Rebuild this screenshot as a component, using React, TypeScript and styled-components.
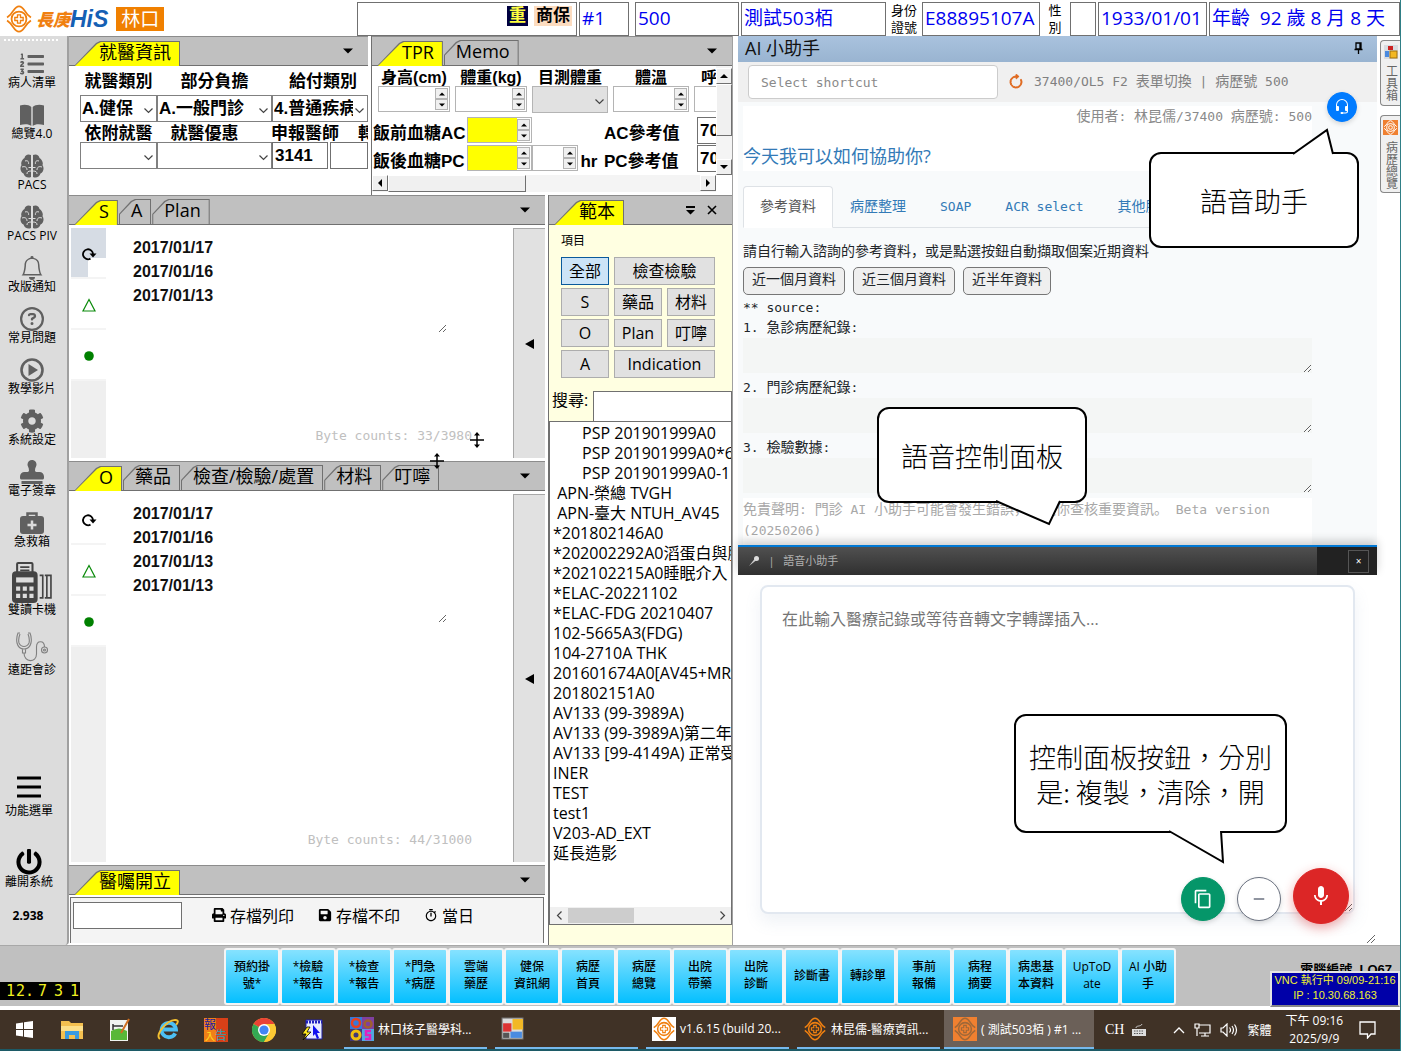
import React from 'react';
import styled, { createGlobalStyle, css } from 'styled-components';
import { FaListOl, FaCog, FaStamp, FaPrint, FaSave, FaPowerOff } from 'react-icons/fa';
import { FaRegCircleQuestion } from 'react-icons/fa6';
import { BsBell, BsArrowClockwise, BsHeadset } from 'react-icons/bs';
import { MdContentCopy, MdMic, MdRemove } from 'react-icons/md';
import { IoMdStopwatch } from 'react-icons/io';

const ui = '"Open Sans", "Noto Sans CJK TC", sans-serif';
const arial = '"Liberation Sans", "Noto Sans CJK TC", sans-serif';
const mono = '"DejaVu Sans Mono", "Noto Sans CJK JP", monospace';

const GlobalStyle = createGlobalStyle`
  *, *::before, *::after { box-sizing: border-box; }
  body { margin: 0; background: #fff; font-family: ${ui}; font-size: 16px; color: #000; }
  button, input, select, textarea { font: inherit; color: inherit; margin: 0; padding: 0; border-radius: 0; }
  button { cursor: pointer; }
`;

const Screen = styled.div`
  display: flex;
  flex-direction: column;
  min-height: 100vh;
  overflow: hidden;
  border-right: 1px solid #2f7f86;
`;

/* ---------- header ---------- */
const Header = styled.header`
  display: grid;
  grid-template-columns: 350px 220px 54px 104px 145px 32px 118px 26px 26px 109px minmax(0, 1fr);
  column-gap: 2px;
  height: 36px;
  padding: 2px 0 3px 5px;
  font-size: 19px;
  color: #0000f0;
`;
const Brand = styled.div`
  display: flex;
  align-items: center;
`;
const BrandZh = styled.span`
  margin-left: 3px;
  font: italic 900 17px/30px "Noto Sans CJK TC", sans-serif;
  color: #f08010;
`;
const BrandHis = styled.span`
  font: italic 900 23px/30px "Liberation Sans", sans-serif;
  color: #1560b4;
`;
const Site = styled.span`
  margin-left: 8px;
  padding: 0 5px;
  font-size: 19px;
  line-height: 24px;
  background: #f08000;
  color: #fff;
`;
const Field = styled.div<{ $after?: number }>`
  display: flex;
  align-items: center;
  min-width: 0;
  padding: 0 2px 3px;
  margin-right: ${(p) => p.$after ?? 0}px;
  border: 1px solid #707070;
  white-space: pre;
  overflow: hidden;
  line-height: 26px;
`;
const FlagField = styled(Field)`
  justify-content: flex-end;
  align-items: flex-start;
  gap: 6px;
  padding: 3px 4px;
  font: bold 17px/20px ${arial};
`;
const Flag = styled.span<{ $bg: string; $fg: string }>`
  padding: 0 2px;
  background: ${(p) => p.$bg};
  color: ${(p) => p.$fg};
`;
const FieldLabel = styled.div`
  font-size: 13px;
  line-height: 17px;
  color: #000;
  text-align: center;
  word-break: break-all;
`;

/* ---------- main grid ---------- */
const Main = styled.main`
  flex: 1;
  display: grid;
  grid-template-columns: 69px minmax(0, 664fr) 5px minmax(0, 639fr) 23px;
  min-height: 0;
`;

/* ---------- sidebar ---------- */
const Sidebar = styled.nav`
  display: flex;
  flex-direction: column;
  align-items: flex-start;
  background: #dcdcdc;
  border-right: 2px solid #a0a0a0;
  border-radius: 0 0 4px 0;
  padding-top: 3px;
`;
const Grip = styled.div`
  width: 56px;
  height: 2px;
  margin: 0 0 11px 4px;
  background: repeating-linear-gradient(90deg, #fff 0 2px, transparent 2px 4px);
`;
const SideItem = styled.button<{ $icon?: number; $gap?: number; $pad?: number }>`
  display: flex;
  flex-direction: column;
  align-items: center;
  width: 64px;
  border: 0;
  background: none;
  color: #000;
  font-size: 12px;
  line-height: 14px;
  white-space: nowrap;
  gap: ${(p) => p.$pad ?? 0}px;
  margin-bottom: ${(p) => p.$gap ?? 13}px;
  svg { width: ${(p) => p.$icon ?? 24}px; height: ${(p) => p.$icon ?? 24}px; color: #606060; flex: none; }
`;
const SideFoot = styled.div`
  margin-top: auto;
  width: 60px;
  svg { color: #000; }
  button { width: 58px; }
`;
const Version = styled.div`
  width: 56px;
  margin-bottom: 22px;
  text-align: center;
  font: bold 12px/14px "Noto Sans", sans-serif;
`;

/* ---------- docked panels ---------- */
const Center = styled.div`
  position: relative;
  display: flex;
  flex-direction: column;
  min-width: 0;
`;
const Split = styled.div<{ $cols: string; $grow?: boolean }>`
  display: grid;
  grid-template-columns: ${(p) => p.$cols};
  column-gap: 3px;
  ${(p) => p.$grow ? 'flex: 1;' : 'height: 159px;'}
`;
const Column = styled.div`
  display: flex;
  flex-direction: column;
  min-width: 0;
`;
const Panel = styled.section<{ $grow?: number; $h?: number; $edge?: boolean; $bg?: string }>`
  display: flex;
  flex-direction: column;
  min-width: 0;
  overflow: hidden;
  background: ${(p) => p.$bg ?? '#fff'};
  ${(p) => p.$grow && css`flex: ${p.$grow};`}
  ${(p) => p.$h && css`height: ${p.$h}px;`}
  ${(p) => p.$edge && css`border-left: 1px solid #707070; border-right: 1px solid #a0a0a0;`}
`;
const Strip = styled.div`
  display: flex;
  align-items: flex-end;
  flex: none;
  height: 30px;
  padding-left: 5px;
  background: #c0c0c0;
  border-top: 1px solid #8c8c8c;
  border-bottom: 1px solid #707070;
`;
const Tab = styled.button<{ $on?: boolean }>`
  --cut: ${(p) => (p.$on ? 'polygon(0 100%, 22px 2px, 26px 0, 100% 0, 100% 100%)' : 'polygon(0 100%, 0 60%, 12px 2px, 16px 0, 100% 0, 100% 100%)')};
  position: relative;
  isolation: isolate;
  height: 25px;
  padding: 0 9px 4px ${(p) => (p.$on ? 25 : 12)}px;
  margin-right: 1px;
  margin-bottom: ${(p) => (p.$on ? -1 : 0)}px;
  border: 0;
  background: #707070;
  clip-path: var(--cut);
  font-size: 18px;
  line-height: 20px;
  white-space: nowrap;
  &::before {
    content: '';
    position: absolute;
    z-index: -1;
    inset: 1px 1px 0 1px;
    background: ${(p) => (p.$on ? '#ffff00' : '#c0c0c0')};
    clip-path: var(--cut);
  }
`;
const StripTools = styled.div`
  display: flex;
  align-items: center;
  gap: 12px;
  margin-left: auto;
  margin-right: 15px;
  height: 28px;
`;
const IconButton = styled.button`
  display: flex;
  border: 0;
  background: none;
`;

/* ---------- visit form ---------- */
const VisitForm = styled.div`
  padding: 4px 0 0 11px;
  font: bold 17px/22px ${arial};
  white-space: nowrap;
`;
const VisitRow = styled.div<{ $cols: string; $h: number }>`
  display: grid;
  grid-template-columns: ${(p) => p.$cols};
  height: ${(p) => p.$h}px;
  overflow: hidden;
`;
const VisitLabel = styled.label`
  text-align: center;
  line-height: 24px;
`;
const ComboBox = styled.span<{ $w?: number; $grey?: boolean }>`
  position: relative;
  display: block;
  flex: none;
  height: 27px;
  ${(p) => p.$w && css`width: ${p.$w}px;`}
  select {
    width: 100%;
    height: 100%;
    padding: 0 14px 0 1px;
    appearance: none;
    border: 1px solid ${(p) => (p.$grey ? '#b4b4b4' : '#808080')};
    background: ${(p) => (p.$grey ? '#e1e1e1' : '#fff')};
    opacity: 1;
  }
  svg { position: absolute; right: 4px; top: 11px; }
`;
const PlainInput = styled.input<{ $w?: number; $after?: number }>`
  height: 27px;
  min-width: 0;
  ${(p) => p.$w && css`width: ${p.$w}px; flex: none;`}
  margin-right: ${(p) => p.$after ?? 0}px;
  padding-left: 2px;
  border: 1px solid #707070;
  background: #fff;
`;

/* ---------- vitals ---------- */
const VitalsFrame = styled.div`
  display: grid;
  grid-template-columns: minmax(0, 1fr) 16px;
  grid-template-rows: 109px 17px;
  font: bold 17px/20px ${arial};
`;
const VitalsView = styled.div`
  overflow: hidden;
  white-space: nowrap;
`;
const HeadRow = styled.div`
  display: flex;
  gap: 5px;
  height: 51px;
  padding: 4px 0 0 6px;
`;
const HeadCell = styled.div<{ $w: number }>`
  flex: none;
  width: ${(p) => p.$w}px;
  text-align: center;
  font-size: 16px;
  label { display: block; line-height: 16px; }
`;
const SugarRow = styled.div`
  display: flex;
  height: 26px;
  margin-bottom: 2px;
`;
const RowText = styled.label<{ $w: number }>`
  flex: none;
  width: ${(p) => p.$w}px;
  padding: 4px 0 0 1px;
  line-height: 26px;
`;
const SpinBox = styled.span<{ $w: number; $bg?: string }>`
  display: flex;
  flex: none;
  width: ${(p) => p.$w}px;
  height: 26px;
  border: 1px solid #b4b4b4;
  background: ${(p) => p.$bg ?? '#fff'};
  input { flex: 1; min-width: 0; width: 0; border: 0; background: none; }
`;
const SpinKeys = styled.span`
  display: grid;
  grid-template-rows: 1fr 1fr;
  width: 14px;
  padding: 1px 1px 1px 0;
  background: #fff;
  button { display: grid; place-items: center; border: 1px solid #b4b4b4; background: #f0f0f0; min-height: 0; }
`;
const ScrollBar = styled.div<{ $across?: boolean }>`
  display: flex;
  flex-direction: ${(p) => (p.$across ? 'row' : 'column')};
  padding-top: ${(p) => (p.$across ? 0 : 2)}px;
  background: #f4f4f4;
`;
const ScrollKey = styled.button`
  display: grid;
  place-items: center;
  width: 16px;
  height: 16px;
  flex: none;
  background: #f0f0f0;
  border: 1px solid;
  border-color: #fff #707070 #707070 #fff;
`;
const Thumb = styled.div<{ $len: number }>`
  flex: 0 0 ${(p) => p.$len}px;
  background: #f0f0f0;
  border: 1px solid;
  border-color: #fff #707070 #707070 #fff;
`;
const Track = styled.div`
  flex: 1;
`;

/* ---------- notes ---------- */
const NotesBody = styled.div`
  flex: 1;
  display: grid;
  grid-template-columns: 35px minmax(0, 1fr) 32px;
  padding: 3px 0 3px 2px;
`;
const Marks = styled.div`
  display: flex;
  flex-direction: column;
  background: #efefef;
`;
const Mark = styled.button<{ $lit?: boolean }>`
  display: grid;
  place-items: center;
  height: 51px;
  padding-top: 2px;
  border: 0;
  border-bottom: 2px solid #f4f4f4;
  background: ${(p) => (p.$lit ? 'linear-gradient(#fff, #fff) 17px 30px / 18px 19px no-repeat #d6dce4' : '#fff')};
`;
const NotesText = styled.div`
  display: flex;
  flex-direction: column;
  padding: 8px 41px 12px 19px;
  textarea {
    width: 322px;
    max-width: 100%;
    padding: 0 8px;
    border: 0;
    outline: 0;
    overflow: hidden;
    font: bold 16px/24px ${arial};
    color: #111;
  }
`;
const ByteCount = styled.output`
  margin-top: auto;
  align-self: flex-end;
  font: 13px/20px ${mono};
  color: #c0c0c0;
`;
const Fold = styled.button`
  display: grid;
  place-items: center;
  border: 1px solid #a8a8a8;
  border-width: 1px 0 0 1px;
  background: #e1e1e1;
`;

/* ---------- order entry ---------- */
const OrderBar = styled.div`
  flex: 1;
  display: flex;
  align-items: flex-start;
  gap: 24px;
  margin: 2px 1px 2px 1px;
  padding: 4px 0 0 2px;
  border: 1px solid #707070;
  border-width: 1px 1px 0 1px;
  background: #f4f4f4;
  button { display: flex; align-items: center; gap: 4px; padding-bottom: 2px; border: 0; background: none; height: 27px; white-space: nowrap; }
  svg { width: 14px; height: 14px; }
`;

/* ---------- templates ---------- */
const TplHead = styled.div`
  padding: 8px 18px 0 12px;
  font-size: 12px;
  line-height: 16px;
`;
const TplGrid = styled.div`
  display: grid;
  grid-template-columns: repeat(3, 48px);
  grid-auto-rows: 28px;
  gap: 3px 5px;
  margin-top: 8px;
  font-size: 16px;
`;
const TplButton = styled.button<{ $wide?: boolean; $on?: boolean }>`
  ${(p) => p.$wide && css`grid-column: span 2;`}
  border: 1px solid ${(p) => (p.$on ? '#0a5a9c' : '#adadad')};
  background: ${(p) => (p.$on ? '#cce4f7' : '#e1e1e1')};
  line-height: 24px;
  white-space: nowrap;
`;
const Search = styled.label`
  display: flex;
  gap: 5px;
  margin-top: 13px;
  padding-left: 3px;
  line-height: 18px;
  white-space: nowrap;
  input { flex: 1; height: 30px; min-width: 0; border: 1px solid #707070; border-bottom: 0; background: #fff; }
`;
const TplListBox = styled.div`
  flex: 1;
  display: flex;
  flex-direction: column;
  margin-bottom: 20px;
  border: 1px solid #707070;
  background: #fff;
`;
const TplList = styled.ul`
  flex: 1;
  margin: 0;
  padding: 1px 0 0 3px;
  list-style: none;
  line-height: 20px;
  overflow: hidden;
  white-space: pre;
`;
const FlatScroll = styled.div`
  display: flex;
  align-items: center;
  height: 17px;
  background: #f0f0f0;
  button { display: grid; place-items: center; width: 18px; height: 17px; border: 0; background: none; }
`;
const FlatThumb = styled.div`
  width: 66px;
  height: 15px;
  margin-right: auto;
  background: #cdcdcd;
`;

/* ---------- AI assistant ---------- */
const AiPane = styled.section`
  position: relative;
  display: flex;
  flex-direction: column;
  min-width: 0;
  font: 13px/20px ${mono};
  color: #212529;
`;
const AiTitle = styled.header`
  display: flex;
  align-items: center;
  justify-content: space-between;
  height: 26px;
  padding: 0 14px 3px 7px;
  background: linear-gradient(#a9c2de, #99b4d1);
  font: 18px/22px ${ui};
  color: #111;
`;
const AiToolbar = styled.div`
  display: flex;
  align-items: center;
  height: 40px;
  padding: 0 10px;
  background: #f0f0f0;
  color: #808080;
  white-space: pre;
  input {
    width: 250px;
    height: 34px;
    padding: 0 12px;
    border: 1px solid #ccc;
    border-radius: 4px;
    background: #fff;
    margin-right: 10px;
  }
  input::placeholder { color: #8a8a8a; opacity: 1; }
  svg { margin-right: 10px; }
`;
const AiBody = styled.div`
  flex: none;
  height: 443px;
  padding: 4px 65px 0 5px;
  background: #f8fafb;
`;
const AiHello = styled.div`
  background: #fff;
  height: 65px;
  padding-top: 1px;
`;
const UserLine = styled.div`
  text-align: right;
  color: #8a8a8a;
  white-space: pre;
`;
const Hello = styled.h1`
  margin: 16px 0 0;
  font: 400 18px/26px ${ui};
  color: #337ab7;
`;
const AiTabs = styled.div`
  display: flex;
  height: 42px;
  margin-top: 15px;
  border-bottom: 1px solid #dee2e6;
`;
const AiTab = styled.button<{ $on?: boolean }>`
  padding: 0 16px;
  margin-bottom: -1px;
  border: 1px solid transparent;
  background: none;
  color: #337ab7;
  white-space: nowrap;
  ${(p) => p.$on && css`
    border-color: #dee2e6 #dee2e6 #fff;
    border-radius: 4px 4px 0 0;
    background: #fff;
    color: #555;
  `}
`;
const Prompt = styled.p`
  margin: 14px 0 5px;
  white-space: nowrap;
`;
const RangeRow = styled.div`
  display: flex;
  gap: 8px;
  margin-bottom: 3px;
  button {
    height: 28px;
    padding: 0 8px 2px;
    border: 1px solid #767676;
    border-radius: 5px;
    background: #efefef;
  }
`;
const Source = styled.label`
  display: block;
  height: 60px;
  textarea {
    display: block;
    width: 100%;
    height: 35px;
    border: 0;
    background: #f4f6f5;
  }
`;
const Disclaimer = styled.p`
  margin: 0;
  height: 48px;
  padding-top: 1px;
  line-height: 21px;
  color: #a8a8a8;
  background: #fff;
`;
const Zh = styled.span`
  font-family: "Noto Sans CJK JP", sans-serif;
  font-size: 14px;
  line-height: 1;
`;

const VoiceBar = styled.div`
  position: relative;
  display: flex;
  align-items: center;
  height: 30px;
  padding-left: 10px;
  border-top: 2px solid #0078d4;
  background: linear-gradient(#505050, #303030);
  box-shadow: 0 -4px 10px rgba(0, 0, 0, 0.2);
  color: #b0b0b0;
  font: 11px/20px ${ui};
  white-space: pre;
`;
const VoiceClose = styled.div`
  display: flex;
  align-items: center;
  justify-content: flex-end;
  align-self: stretch;
  width: 60px;
  margin-left: auto;
  padding-right: 8px;
  background: #222;
  button { width: 21px; height: 23px; border: 1px solid #555; background: none; color: #fff; font-size: 10px; line-height: 20px; }
`;
const VoiceArea = styled.div`
  flex: 1;
  position: relative;
  display: flex;
  padding: 10px 22px 31px 22px;
  background: #fff;
  textarea {
    flex: 1;
    padding: 20px;
    border: 2px solid #e2e8f0;
    border-radius: 8px;
    box-shadow: 0 8px 16px rgba(120, 150, 180, 0.12);
    font: 16px/24px ${ui};
  }
  textarea::placeholder { color: #757575; opacity: 1; }
`;
const Corner = styled.div`
  position: absolute;
  right: 0;
  bottom: 0;
  line-height: 0;
`;
const Controls = styled.div`
  position: absolute;
  right: 28px;
  bottom: 21px;
  display: flex;
  align-items: flex-end;
  gap: 12px;
`;
const Round = styled.button<{ $size: number; $bg: string; $fg: string; $line?: string; $glow?: string; $lift?: number }>`
  display: grid;
  place-items: center;
  width: ${(p) => p.$size}px;
  height: ${(p) => p.$size}px;
  margin-bottom: ${(p) => p.$lift ?? 0}px;
  border: 1px solid ${(p) => p.$line ?? p.$bg};
  border-radius: 50%;
  background: ${(p) => p.$bg};
  color: ${(p) => p.$fg};
  box-shadow: ${(p) => p.$glow ?? '0 2px 5px rgba(0, 0, 0, 0.15)'};
`;
const HelperSpot = styled.div`
  position: absolute;
  right: 20px;
  top: 56px;
`;
const Bubble = styled.div<{ $x: number; $y: number; $w: number; $h: number }>`
  position: absolute;
  z-index: 2;
  left: ${(p) => p.$x}px;
  top: ${(p) => p.$y}px;
  display: grid;
  place-items: center;
  width: ${(p) => p.$w}px;
  height: ${(p) => p.$h}px;
  border: 2px solid #000;
  border-radius: 12px;
  background: #fff;
  color: #000;
  text-align: center;
  white-space: pre;
  font: 300 27px/35px "Noto Sans CJK TC", sans-serif;
  svg { position: absolute; overflow: visible; }
`;

/* ---------- right rail ---------- */
const Rail = styled.aside`
  display: flex;
  flex-direction: column;
  gap: 9px;
  padding: 4px 0 0 3px;
`;
const RailTab = styled.button<{ $h: number }>`
  display: flex;
  flex-direction: column;
  align-items: center;
  gap: 6px;
  width: 20px;
  height: ${(p) => p.$h}px;
  padding-top: 4px;
  border: 1px solid #888;
  border-right: 0;
  border-radius: 4px 0 0 4px;
  background: #f0f0f0;
  color: #666;
  font-size: 12px;
  line-height: 16px;
  span { writing-mode: vertical-rl; }
  svg { flex: none; }
`;

/* ---------- bottom ---------- */
const Shortcuts = styled.footer`
  position: relative;
  display: flex;
  align-items: center;
  height: 61px;
  margin-bottom: 4px;
  padding-left: 224px;
  background: #c0c0c0;
  border-top: 1px solid #a8a8a8;
`;
const Shortcut = styled.button`
  flex: 0 0 56px;
  height: 57px;
  padding-bottom: 2px;
  border: 2px solid #f4f4f4;
  border-radius: 3px;
  background: linear-gradient(#86e2ff, #04bfff);
  font-size: 12px;
  font-weight: 500;
  line-height: 17px;
  white-space: pre;
`;
const Counter = styled.div`
  position: absolute;
  left: 0;
  top: 36px;
  display: flex;
  width: 80px;
  height: 18px;
  background: #000;
  color: #f0f020;
  font: 15px/18px "DejaVu Sans Mono", monospace;
`;
const CounterCell = styled.span`
  width: 16px;
  padding-right: 1px;
  text-align: right;
`;
const Station = styled.div`
  margin-left: auto;
  margin-right: 8px;
  align-self: flex-start;
  padding-top: 16px;
  white-space: pre;
  font: bold 13px/16px ${arial};
`;
const Vnc = styled.div`
  position: absolute;
  right: 0;
  top: 25px;
  width: 130px;
  height: 36px;
  border: 2px solid #e4e4e4;
  border-bottom-color: #888;
  background: #0000a8;
  color: #f0f030;
  font: 11px/15px ${arial};
  text-align: center;
  white-space: nowrap;
`;
const Taskbar = styled.nav`
  display: flex;
  align-items: stretch;
  height: 41px;
  background: #403226;
  border-bottom: 2px solid #1c5a66;
  color: #fff;
`;
const Launch = styled.button`
  display: grid;
  place-items: center;
  width: 48px;
  border: 0;
  background: none;
`;
const Tasks = styled.div`
  display: flex;
  gap: 8px;
  margin-left: 8px;
  font-size: 12px;
`;
const Task = styled.button<{ $on?: boolean }>`
  display: flex;
  align-items: center;
  gap: 4px;
  width: ${(p) => (p.$on ? 150 : 143)}px;
  margin-left: ${(p) => (p.$on ? -4 : 0)}px;
  padding-left: ${(p) => (p.$on ? 9 : 6)}px;
  border: 0;
  border-bottom: 2px solid #76b9ed;
  background: ${(p) => (p.$on ? '#6b6058' : 'none')};
  color: #fff;
  white-space: pre;
  svg { flex: none; }
`;
const Tray = styled.div`
  flex: 1;
  display: flex;
  align-items: center;
  padding: 0 24px 0 11px;
  white-space: nowrap;
`;
const TrayGroup = styled.div<{ $gap: number; $after: number }>`
  display: flex;
  align-items: center;
  gap: ${(p) => p.$gap}px;
  margin-right: ${(p) => p.$after}px;
  font-size: 12px;
`;
const Ime = styled.span`
  font: 14px/16px "Liberation Serif", serif;
`;
const Clock = styled.time`
  margin-right: auto;
  text-align: center;
  font-size: 12px;
  line-height: 18px;
`;
const PointerMark = styled.div<{ $x: number; $y: number }>`
  position: absolute;
  z-index: 3;
  left: ${(p) => p.$x}px;
  top: ${(p) => p.$y}px;
  line-height: 0;
`;

/* ---------- drawings ---------- */
const turns = { down: 0, left: 90, up: 180, right: 270 };
const Arrow = ({ dir = 'down', w = 8 }: { dir?: keyof typeof turns; w?: number }) => (
  <svg width={w} height={w} viewBox="0 0 8 8" style={{ transform: `rotate(${turns[dir]}deg)` }}><path d="M0 2h8L4 6z" /></svg>
);
const Chevron = ({ dir = 'down' }: { dir?: keyof typeof turns }) => (
  <svg width="9" height="9" viewBox="0 0 9 9" style={{ transform: `rotate(${turns[dir]}deg)` }} fill="none" stroke="#444" strokeWidth="1.2"><path d="M0.5 2.5l4 4 4-4" /></svg>
);
const Emblem = ({ size, fg = '#f08010', bg }: { size: number; fg?: string; bg?: string }) => (
  <svg width={size} height={size} viewBox="0 0 94 94" fill="none" stroke={fg} strokeWidth="6">
    {bg && <rect width="94" height="94" fill={bg} stroke="none" />}
    <circle cx="47" cy="47" r="25" />
    <path d="M7 42Q20 33 28 19 47-10 66 19 74 33 87 42M7 52Q20 61 28 75 47 104 66 75 74 61 87 52" />
    <path d="M42 33h10v9h9v10h-9v9H42v-9h-9V42h9z" strokeWidth="4.500" />
  </svg>
);
const Book = () => (
  <svg viewBox="0 0 24 24" fill="currentColor"><path d="M0 2.500C5 1 9 2 11.300 4v19C9 21 5 20.500 0 22zM24 2.500C19 1 15 2 12.700 4v19c2.300-2 6.300-2.500 11.300-1z" /></svg>
);
const Brain = () => (
  <svg viewBox="0 0 24 24">
    <path d="M11 1C8-.5 5 1 4.500 4 2 5.500.5 9 1.500 11-.5 14 .5 18 3.500 19.500 4.500 23 8 24.500 11 23zM13 1c3-1.500 6 0 6.500 3 2.500 1.500 4 5 3 7 2 3 1 7-2 8.500-1 3.500-4.500 5-7.500 3.500z" fill="currentColor" />
    <path d="M5 7c3-1 4 1 3.500 3M2 13c3-1 5 0 5 3M7 20c0-2 1-3 4-3M19 7c-3-1-4 1-3.500 3M22 13c-3-1-5 0-5 3M17 20c0-2-1-3-4-3M8.500 13.500h7" fill="none" stroke="#dcdcdc" strokeWidth="1" />
  </svg>
);
const AidCase = () => (
  <svg viewBox="0 0 24 24">
    <path d="M7.500 6V2.500h9V6" fill="none" stroke="currentColor" strokeWidth="2.500" />
    <rect x="0" y="5" width="24" height="18" rx="3" fill="currentColor" />
    <path d="M12 9.500v9M7.500 14h9" stroke="#dcdcdc" strokeWidth="2.500" />
  </svg>
);
const Play = () => (
  <svg viewBox="0 0 24 24" fill="none" stroke="currentColor" strokeWidth="2.600"><circle cx="12" cy="12" r="10.500" /><path d="M8.500 6l9.500 6-9.500 6z" fill="currentColor" stroke="none" /></svg>
);
const CardReader = () => (
  <svg viewBox="0 0 40 40" fill="none" stroke="#444" strokeWidth="2">
    <rect x="5" y="1" width="15" height="12" rx="1" /><path d="M8 5h9M8 8h9" strokeWidth="1.500" />
    <rect x="1" y="10" width="23" height="29" rx="3" fill="#444" />
    <path d="M4 15h17v5H4z" fill="#dcdcdc" stroke="none" />
    <path d="M4 24h4v4H4zM10.500 24h4v4h-4zM17 24h4v4h-4zM4 31h4v4H4zM10.500 31h4v4h-4zM17 31h4v4h-4z" fill="#dcdcdc" stroke="none" />
    <path d="M27 13h3v22h-3M32 13h6v22h-6M34 13v22" strokeWidth="1.600" />
  </svg>
);
const Stethoscope = () => (
  <svg viewBox="0 0 32 32" fill="none" stroke="#808080" strokeWidth="1.100">
    <path d="M4 2H2q-2 5-1 10c1 4 4 6 7 6s6-2 7-6q1-5-1-10h-2M4 3Q2 8 3 12c1 2 3 3.500 5 3.500s4-1.500 5-3.500q1-4-1-9M6.500 18h3v4h-3zM8 22c0 10 12.500 10 12.500 1V16c0-7 8-7 8 0" />
    <circle cx="28.500" cy="19" r="3" /><circle cx="28.500" cy="19" r="1" />
  </svg>
);
const Bars = () => (
  <svg viewBox="0 0 24 24" stroke="#000" strokeWidth="3"><path d="M0 3h24M0 12h24M0 21h24" /></svg>
);
const Reload = () => (
  <svg width="16" height="14" viewBox="0 0 16 14" fill="none" stroke="#000" strokeWidth="1.800"><path d="M9.500 11.600A5 5 0 1 1 12 7.500" /><path d="M8.500 6.500h7L12 10.500z" fill="#000" stroke="none" /></svg>
);
const Grid3 = ({ size = 18 }: { size?: number }) => (
  <svg width={size} height={size} viewBox="0 0 22 22">
    <rect x="1" y="1" width="20" height="20" fill="#ddd" stroke="#777" />
    <rect x="2" y="6" width="8" height="8" fill="#d33" /><rect x="11" y="2" width="10" height="10" fill="#f2b824" /><rect x="9" y="14" width="11" height="6" fill="#4a8be0" /><path d="M2 15h6v5H2z" fill="#555" />
  </svg>
);
const ToolboxMark = () => (
  <svg width="14" height="14" viewBox="0 0 14 14"><rect width="14" height="14" fill="#d8dce0" /><rect x="4" y="1" width="5" height="4" fill="#c22" /><rect x="1" y="6" width="4" height="6" fill="#4a8be0" /><rect x="6" y="6" width="7" height="7" fill="#f2b824" stroke="#a07010" /></svg>
);
const SplitPointer = () => (
  <svg width="16" height="16" viewBox="0 0 16 16" stroke="#000" fill="#000" strokeWidth="1.500"><path d="M1 8h14M8 2v12" /><path d="M8 0l3 3.500H5zM8 16l3-3.500H5z" stroke="none" /></svg>
);
const ResizeMark = () => (
  <svg width="12" height="12" viewBox="0 0 12 12" stroke="#666"><path d="M2 10l8-8M6 10l4-4" /></svg>
);

const CJK = /([\u3000-\u9fff\uff00-\uffef]+)/;
const Mixed = ({ text }: { text: string }) => (
  <span>{text.split(CJK).map((part, i) => (i % 2 ? <Zh key={i}>{part}</Zh> : part))}</span>
);

const Combo = ({ id, value, w, grey }: { id: string; value?: string; w?: number; grey?: boolean }) => (
  <ComboBox $w={w} $grey={grey}>
    <select id={id} aria-label={id} disabled={grey}><option>{value ?? ''}</option></select>
    <Chevron />
  </ComboBox>
);
const Spin = ({ id, w, bg }: { id: string; w: number; bg?: string }) => (
  <SpinBox $w={w} $bg={bg}>
    <input id={id} aria-label={id} />
    <SpinKeys>
      <button aria-label="increase"><Arrow dir="up" w={6} /></button>
      <button aria-label="decrease"><Arrow w={6} /></button>
    </SpinKeys>
  </SpinBox>
);
const TabStrip = ({ tabs, children }: { tabs: string[]; children?: React.ReactNode }) => (
  <Strip>
    {tabs.map((t, i) => <Tab key={t} $on={i === 0}>{t}</Tab>)}
    <StripTools>{children ?? <IconButton aria-label="menu"><Arrow w={10} /></IconButton>}</StripTools>
  </Strip>
);
const Notes = ({ name, lines, bytes, lit }: { name: string; lines: string[]; bytes: string; lit?: boolean }) => (
  <NotesBody>
    <Marks>
      <Mark $lit={lit} aria-label="reload"><Reload /></Mark>
      <Mark aria-label="triangle"><svg width="14" height="14" viewBox="0 0 14 14" fill="none" stroke="#0a8a0a" strokeWidth="1.200"><path d="M7 1.500l6 11.500H1z" /></svg></Mark>
      <Mark aria-label="dot"><svg width="10" height="10"><circle cx="5" cy="5" r="4.800" fill="#008000" /></svg></Mark>
    </Marks>
    <NotesText>
      <textarea aria-label={name} defaultValue={lines.join('\n')} style={{ height: lines.length * 24 + 25 }} />
      <ByteCount>{`Byte counts: ${bytes}`}</ByteCount>
    </NotesText>
    <Fold aria-label="collapse"><svg width="10" height="10"><path d="M0 5l9-5v10z" /></svg></Fold>
  </NotesBody>
);

const sideItems: { label: string; icon: React.ReactNode; size?: number; gap?: number }[] = [
  { label: '病人清單', icon: <FaListOl /> },
  { label: '總覽4.0', icon: <Book /> },
  { label: 'PACS', icon: <Brain /> },
  { label: 'PACS PIV', icon: <Brain /> },
  { label: '改版通知', icon: <BsBell /> },
  { label: '常見問題', icon: <FaRegCircleQuestion /> },
  { label: '教學影片', icon: <Play /> },
  { label: '系統設定', icon: <FaCog /> },
  { label: '電子簽章', icon: <FaStamp /> },
  { label: '急救箱', icon: <AidCase /> },
  { label: '雙讀卡機', icon: <CardReader />, size: 41, gap: 14 },
  { label: '遠距會診', icon: <Stethoscope />, size: 32 },
];
const templates = [
  '       PSP 201901999A0', '       PSP 201901999A0*6', '       PSP 201901999A0-1', ' APN-榮總 TVGH', ' APN-臺大 NTUH_AV45',
  '*201802146A0', '*202002292A0滔蛋白與腦', '*202102215A0睡眠介入', '*ELAC-20221102', '*ELAC-FDG 20210407', '102-5665A3(FDG)',
  '104-2710A THK', '201601674A0[AV45+MRI', '201802151A0', 'AV133 (99-3989A)', 'AV133 (99-3989A)第二年', 'AV133 [99-4149A) 正常受',
  'INER', 'TEST', 'test1', 'V203-AD_EXT', '延長造影',
];
const shortcuts = [
  '預約掛\n號*', '*檢驗\n*報告', '*檢查\n*報告', '*門急\n*病歷', '雲端\n藥歷', '健保\n資訊網', '病歷\n首頁', '病歷\n總覽', '出院\n帶藥',
  '出院\n診斷', '診斷書', '轉診單', '事前\n報備', '病程\n摘要', '病患基\n本資料', 'UpToD\nate', 'AI 小助\n手',
];

export default function App() {
  return (
    <Screen>
      <GlobalStyle />
      <Header>
        <Brand>
          <Emblem size={28} />
          <BrandZh>長庚</BrandZh>
          <BrandHis>HiS</BrandHis>
          <Site>林口</Site>
        </Brand>
        <FlagField><Flag $bg="#000040" $fg="#ffff40">重</Flag><Flag $bg="#fcdcc0" $fg="#000">商保</Flag></FlagField>
        <Field $after={4}>#1</Field>
        <Field>500</Field>
        <Field>測試503栢</Field>
        <FieldLabel>身份證號</FieldLabel>
        <Field>E88895107A</Field>
        <FieldLabel>性<br />別</FieldLabel>
        <Field />
        <Field>1933/01/01</Field>
        <Field>{'年齡  92 歲 8 月 8 天'}</Field>
      </Header>

      <Main>
        <Sidebar>
          <Grip />
          {sideItems.map((s) => (
            <SideItem key={s.label} $icon={s.size} $gap={s.gap}>{s.icon}{s.label}</SideItem>
          ))}
          <SideFoot>
            <SideItem $gap={31} $pad={5}><Bars />功能選單</SideItem>
            <SideItem $icon={26} $gap={20}><FaPowerOff />離開系統</SideItem>
          </SideFoot>
          <Version>2.938</Version>
        </Sidebar>

        <Center>
          <Split $cols="minmax(0, 299fr) minmax(0, 362fr)">
            <Panel>
              <TabStrip tabs={['就醫資訊']} />
              <VisitForm>
                <VisitRow $cols="77px 115px 102px" $h={25}>
                  <VisitLabel htmlFor="visit">就醫類別</VisitLabel>
                  <VisitLabel htmlFor="copay">部分負擔</VisitLabel>
                  <VisitLabel htmlFor="benefit">給付類別</VisitLabel>
                </VisitRow>
                <VisitRow $cols="77px 115px 1fr" $h={27}>
                  <Combo id="visit" value="A.健保" />
                  <Combo id="copay" value="A.一般門診" />
                  <Combo id="benefit" value="4.普通疾病" />
                </VisitRow>
                <VisitRow $cols="77px 95px 106px 1fr" $h={20}>
                  <VisitLabel htmlFor="attach">依附就醫</VisitLabel>
                  <VisitLabel htmlFor="discount">就醫優惠</VisitLabel>
                  <VisitLabel htmlFor="doctor">申報醫師</VisitLabel>
                  <VisitLabel htmlFor="refer">轉診</VisitLabel>
                </VisitRow>
                <VisitRow $cols="77px 115px 58px 1fr" $h={27}>
                  <Combo id="attach" />
                  <Combo id="discount" />
                  <PlainInput id="doctor" defaultValue="3141" $w={56} />
                  <PlainInput id="refer" />
                </VisitRow>
              </VisitForm>
            </Panel>
            <Panel $edge>
              <TabStrip tabs={['TPR', 'Memo']} />
              <VitalsFrame>
                <VitalsView>
                  <HeadRow>
                    <HeadCell $w={72}><label htmlFor="height">身高(cm)</label><Spin id="height" w={72} /></HeadCell>
                    <HeadCell $w={72}><label htmlFor="weight">體重(kg)</label><Spin id="weight" w={72} /></HeadCell>
                    <HeadCell $w={76}><label htmlFor="estimate">目測體重</label><Combo id="estimate" w={76} grey /></HeadCell>
                    <HeadCell $w={76}><label htmlFor="temp">體溫</label><Spin id="temp" w={76} /></HeadCell>
                    <HeadCell $w={46}><label htmlFor="breath">呼吸</label><Spin id="breath" w={46} /></HeadCell>
                  </HeadRow>
                  <SugarRow>
                    <RowText $w={95} htmlFor="ac">飯前血糖AC</RowText>
                    <Spin id="ac" w={65} bg="#ffff00" />
                    <RowText $w={71} htmlFor="acref" />
                    <RowText $w={94} htmlFor="acref">AC參考值</RowText>
                    <PlainInput id="acref" defaultValue="70" $w={60} />
                  </SugarRow>
                  <SugarRow>
                    <RowText $w={95} htmlFor="pc">飯後血糖PC</RowText>
                    <Spin id="pc" w={65} bg="#ffff00" />
                    <Spin id="hours" w={46} />
                    <RowText $w={25} htmlFor="hours">&#8202;hr</RowText>
                    <RowText $w={94} htmlFor="pcref">PC參考值</RowText>
                    <PlainInput id="pcref" defaultValue="70" $w={60} />
                  </SugarRow>
                </VitalsView>
                <ScrollBar>
                  <ScrollKey aria-label="up"><Arrow dir="up" /></ScrollKey>
                  <Thumb $len={52} />
                  <Track />
                  <ScrollKey aria-label="down"><Arrow /></ScrollKey>
                </ScrollBar>
                <ScrollBar $across>
                  <ScrollKey aria-label="left"><Arrow dir="left" /></ScrollKey>
                  <Thumb $len={138} />
                  <Track />
                  <ScrollKey aria-label="right"><Arrow dir="right" /></ScrollKey>
                </ScrollBar>
              </VitalsFrame>
            </Panel>
          </Split>

          <Split $cols="minmax(0, 476fr) minmax(0, 185fr)" $grow>
            <Column>
              <Panel $h={266}>
                <TabStrip tabs={['S', 'A', 'Plan']} />
                <Notes name="Subjective" lit lines={['2017/01/17', '2017/01/16', '2017/01/13']} bytes="33/3980" />
              </Panel>
              <Panel $grow={1}>
                <TabStrip tabs={['O', '藥品', '檢查/檢驗/處置', '材料', '叮嚀']} />
                <Notes name="Objective" lines={['2017/01/17', '2017/01/16', '2017/01/13', '2017/01/13']} bytes="44/31000" />
              </Panel>
              <Panel $h={80}>
                <TabStrip tabs={['醫囑開立']} />
                <OrderBar>
                  <PlainInput aria-label="order" $w={109} $after={6} />
                  <button><FaPrint />存檔列印</button>
                  <button><FaSave />存檔不印</button>
                  <button><IoMdStopwatch />當日</button>
                </OrderBar>
              </Panel>
            </Column>
            <Panel $edge $bg="#ffffe1">
              <TabStrip tabs={['範本']}>
                <IconButton aria-label="menu"><svg width="9" height="9"><path d="M0 0h9v2H0zM0 4h9L4.500 8.500z" /></svg></IconButton>
                <IconButton aria-label="close"><svg width="10" height="10" stroke="#000" strokeWidth="1.600"><path d="M1 1l8 8M9 1l-8 8" /></svg></IconButton>
              </TabStrip>
              <TplHead>
                項目
                <TplGrid>
                  <TplButton $on>全部</TplButton><TplButton $wide>檢查檢驗</TplButton>
                  <TplButton>S</TplButton><TplButton>藥品</TplButton><TplButton>材料</TplButton>
                  <TplButton>O</TplButton><TplButton>Plan</TplButton><TplButton>叮嚀</TplButton>
                  <TplButton>A</TplButton><TplButton $wide>Indication</TplButton>
                </TplGrid>
              </TplHead>
              <Search>搜尋:<input /></Search>
              <TplListBox>
                <TplList>{templates.map((t) => <li key={t}>{t}</li>)}</TplList>
                <FlatScroll>
                  <button aria-label="left"><Chevron dir="left" /></button>
                  <FlatThumb />
                  <button aria-label="right"><Chevron dir="right" /></button>
                </FlatScroll>
              </TplListBox>
            </Panel>
          </Split>
          <PointerMark $x={400} $y={396}><SplitPointer /></PointerMark>
          <PointerMark $x={360} $y={417}><SplitPointer /></PointerMark>
        </Center>

        <span />

        <AiPane>
          <AiTitle>AI 小助手<svg width="9" height="12" viewBox="0 0 9 12" fill="none" stroke="#000" strokeWidth="1.300"><path d="M2 1h5v6H2zM0.500 7.500h8M4.500 8v4M6 1v6" /></svg></AiTitle>
          <AiToolbar>
            <input placeholder="Select shortcut" aria-label="shortcut" />
            <BsArrowClockwise size={16} color="#e06a20" strokeWidth={1} />
            <Mixed text="37400/OL5 F2 表單切換 | 病歷號 500" />
          </AiToolbar>
          <AiBody>
            <AiHello>
              <UserLine><Mixed text="使用者: 林昆儒/37400 病歷號: 500" /></UserLine>
              <Hello>今天我可以如何協助你?</Hello>
            </AiHello>
            <AiTabs>
              {['參考資料', '病歷整理', 'SOAP', 'ACR select', '其他服務'].map((t, i) => (
                <AiTab key={t} $on={i === 0}><Mixed text={t} /></AiTab>
              ))}
            </AiTabs>
            <Prompt><Mixed text="請自行輸入諮詢的參考資料，或是點選按鈕自動擷取個案近期資料" /></Prompt>
            <RangeRow>
              {['近一個月資料', '近三個月資料', '近半年資料'].map((t) => <button key={t}><Mixed text={t} /></button>)}
            </RangeRow>
            <div>** source:</div>
            {['1. 急診病歷紀錄:', '2. 門診病歷紀錄:', '3. 檢驗數據:'].map((t) => (
              <Source key={t}><Mixed text={t} /><textarea /></Source>
            ))}
            <Disclaimer><Mixed text="免責聲明: 門診 AI 小助手可能會發生錯誤，建議你查核重要資訊。 Beta version (20250206)" /></Disclaimer>
          </AiBody>
          <VoiceBar>
            <svg width="12" height="12" viewBox="0 0 12 12"><path d="M1 11l5.500-7 1.500 1.500z" fill="#ccc" /><circle cx="8.500" cy="3.500" r="2.500" fill="#ddd" /></svg>
            {'   |   語音小助手'}
            <VoiceClose><button aria-label="close">×</button></VoiceClose>
          </VoiceBar>
          <VoiceArea>
            <textarea aria-label="transcript" placeholder="在此輸入醫療記錄或等待音轉文字轉譯插入..." />
            <Corner><ResizeMark /></Corner>
            <Controls>
              <Round $size={44} $lift={3} $bg="#059669" $fg="#fff" aria-label="複製"><MdContentCopy size={20} /></Round>
              <Round $size={44} $lift={3} $bg="#fff" $fg="#6b7280" $line="#6b7280" aria-label="清除"><MdRemove size={18} /></Round>
              <Round $size={56} $bg="#dc2626" $fg="#fff" $glow="0 4px 12px rgba(220, 38, 38, 0.4)" aria-label="開"><MdMic size={24} /></Round>
            </Controls>
          </VoiceArea>
          <HelperSpot>
            <Round $size={30} $bg="#007bff" $fg="#fff" aria-label="語音助手"><BsHeadset size={16} /></Round>
          </HelperSpot>
          <Bubble $x={411} $y={116} $w={210} $h={96}>
            <svg width="40" height="24" viewBox="0 0 40 24" style={{ left: 142, top: -24 }}><path d="M0 24L34 0l6 24" fill="#fff" stroke="#000" strokeWidth="2" /></svg>
            語音助手
          </Bubble>
          <Bubble $x={139} $y={371} $w={210} $h={96}>
            <svg width="64" height="24" viewBox="0 0 64 24" style={{ left: 117, top: 92 }}><path d="M0 0l53 23L64 0" fill="#fff" stroke="#000" strokeWidth="2" /></svg>
            語音控制面板
          </Bubble>
          <Bubble $x={276} $y={678} $w={273} $h={119}>
            <svg width="54" height="32" viewBox="0 0 54 32" style={{ left: 153, top: 115 }}><path d="M0 0l54 31L52 0" fill="#fff" stroke="#000" strokeWidth="2" /></svg>
            {'控制面板按鈕，分別\n是: 複製，清除，開'}
          </Bubble>
        </AiPane>

        <Rail>
          <RailTab $h={66}><ToolboxMark /><span>工具箱</span></RailTab>
          <RailTab $h={78}><Emblem size={15} fg="#fff" bg="#f08030" /><span>病歷總覽</span></RailTab>
        </Rail>
      </Main>

      <Shortcuts>
        {shortcuts.map((s) => <Shortcut key={s}>{s}</Shortcut>)}
        <Counter>{['1', '2.', '7', '3', '1'].map((d, i) => <CounterCell key={i}>{d}</CounterCell>)}</Counter>
        <Station>電腦編號  LQ67</Station>
        <Vnc>VNC 執行中 09/09-21:16<br />IP : 10.30.68.163</Vnc>
      </Shortcuts>

      <Taskbar>
        <Launch aria-label="start"><svg width="17" height="17" viewBox="0 0 17 17" fill="#fff"><path d="M0 2.500l7-1v6.500H0zM8 1.300L17 0v8H8zM0 9h7v6.500l-7-1zM8 9h9v8l-9-1.300z" /></svg></Launch>
        <Launch aria-label="files"><svg width="22" height="20" viewBox="0 0 22 20"><path d="M0 1h8l2 2h12v16H0z" fill="#f4c050" /><path d="M0 6h22v5H0z" fill="#fde08a" /><path d="M4 11h14v8h-4v-4H8v4H4z" fill="#3a9be0" /></svg></Launch>
        <Launch aria-label="editor"><svg width="22" height="24" viewBox="0 0 22 24"><path d="M1 2h18v21H1z" fill="#f0f4f0" /><path d="M2 13q8-5 16 0v9H2z" fill="#58b838" /><path d="M4 6v6M4 8h10" stroke="#333" strokeWidth="1.500" /><path d="M20 1l-8 14" stroke="#d07020" strokeWidth="2" /></svg></Launch>
        <Launch aria-label="browser"><svg width="23" height="23" viewBox="0 0 24 24" fill="none"><path d="M19 16a7.500 7.500 0 1 1 .8-4H7" stroke="#4cc0f4" strokeWidth="4" /><path d="M3 22C-2 18 9 3 19 2c4 0 3 3 1 5" stroke="#f4c030" strokeWidth="2" /></svg></Launch>
        <Launch aria-label="report"><svg width="24" height="24" viewBox="0 0 24 24"><rect width="24" height="24" fill="#f08018" /><rect x="12" width="12" height="24" fill="#d84018" /><text x="0" y="11" fontSize="12" fill="#2020a0" fontFamily="Noto Sans CJK TC">報</text><text x="11" y="22" fontSize="12" fill="#30a0b0" fontFamily="Noto Sans CJK TC">告</text><text x="1" y="22" fontSize="10" fill="#ffe020" fontFamily="Noto Sans CJK TC">入</text></svg></Launch>
        <Launch aria-label="chrome"><svg width="24" height="24" viewBox="0 0 24 24"><circle cx="12" cy="12" r="12" fill="#fcc934" /><path d="M12 12L1.600 6A12 12 0 0 1 22.400 6z" fill="#ea4335" /><path d="M12 12L1.600 6A12 12 0 0 0 12 24l5.200-9z" fill="#34a853" /><path d="M12 6h10.400A12 12 0 0 1 12 24l5.200-9z" fill="#fcc934" /><circle cx="12" cy="12" r="6" fill="#fff" /><circle cx="12" cy="12" r="4.600" fill="#4285f4" /></svg></Launch>
        <Launch aria-label="tool"><svg width="22" height="22" viewBox="0 0 22 22"><path d="M5 1h16v19H5z" fill="#e8ecff" stroke="#2020a0" /><path d="M5 3h16" stroke="#2020c0" strokeWidth="3" strokeDasharray="2 1" /><path d="M12 6l7 8h-3l2 5-2 1-2-5-2 2z" fill="#1010f0" /><path d="M6 8L1 15h4l-3 6 8-8H6l3-5z" fill="#ffe820" stroke="#000" strokeWidth="0.800" /></svg></Launch>
        <Tasks>
          <Task><svg width="24" height="24" viewBox="0 0 24 24"><rect width="12" height="12" fill="#3878d8" /><rect x="12" width="12" height="12" fill="#8040a0" /><rect y="12" width="12" height="12" fill="#403878" /><rect x="12" y="12" width="12" height="12" fill="#50a8e0" /><circle cx="6" cy="6" r="4" fill="none" stroke="#e84020" strokeWidth="2.500" /><circle cx="18" cy="7" r="3.500" fill="none" stroke="#a06030" strokeWidth="2.500" /><circle cx="6" cy="18" r="4" fill="none" stroke="#f0c010" strokeWidth="3" /><path d="M21 14h-5v4h4v4h-5" fill="none" stroke="#e020c0" strokeWidth="2.500" /></svg>林口核子醫學科...</Task>
          <Task><Grid3 size={23} /></Task>
          <Task><Emblem size={24} bg="#fff" />v1.6.15 (build 20...</Task>
          <Task><Emblem size={24} />林昆儒-醫療資訊...</Task>
          <Task $on><Emblem size={24} fg="#a06838" bg="#f08030" />{'( 測試503栢 ) #1 ...'}</Task>
        </Tasks>
        <Tray>
          <TrayGroup $gap={7} $after={26}><Ime>CH</Ime><svg width="16" height="14" viewBox="0 0 16 14"><path d="M1 6h14v7H1z" fill="#ddd" /><path d="M3 8h10M3 10.500h10" stroke="#555" strokeDasharray="1.500 1" /><path d="M5 5c0-3 5-1 6-4" stroke="#ccc" fill="none" /></svg></TrayGroup>
          <TrayGroup $gap={9} $after={14}>
            <svg width="12" height="8" fill="none" stroke="#fff" strokeWidth="1.300"><path d="M1 7l5-5 5 5" /></svg>
            <svg width="17" height="14" fill="none" stroke="#fff" strokeWidth="1.200"><path d="M5 2h11v8H5M11 10v3M7 13h8M1 1h4v4H1zM3 5v8" /></svg>
            <svg width="18" height="14" fill="none" stroke="#fff" strokeWidth="1.200"><path d="M1 5h2l4-4v12L3 9H1zM9.500 4.500q2 2.500 0 5M12 3q3 4 0 8M14.500 1.500q4 5.500 0 11" /></svg>
            繁體
          </TrayGroup>
          <Clock>下午 09:16<br />2025/9/9</Clock>
          <svg width="17" height="18" fill="none" stroke="#fff" strokeWidth="1.300"><path d="M1 1h15v12h-4l-3.500 4V13H1z" /></svg>
        </Tray>
      </Taskbar>
    </Screen>
  );
}
